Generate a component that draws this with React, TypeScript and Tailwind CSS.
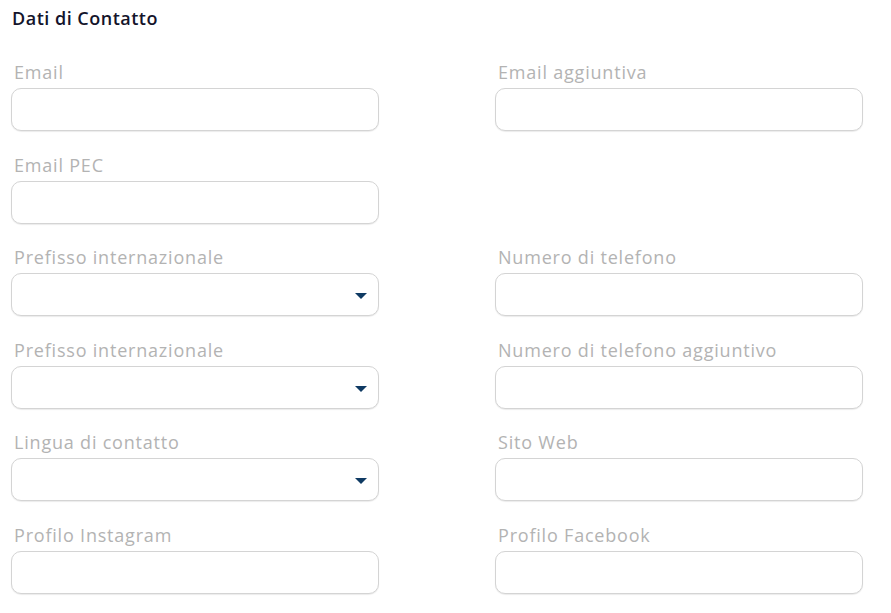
// Sezione "Dati di Contatto" — griglia 2 colonne di campi input / select.

const FIELDS: ({ label: string; select?: boolean } | null)[] = [
  { label: "Email" },
  { label: "Email aggiuntiva" },
  { label: "Email PEC" },
  null,
  { label: "Prefisso internazionale", select: true },
  { label: "Numero di telefono" },
  { label: "Prefisso internazionale", select: true },
  { label: "Numero di telefono aggiuntivo" },
  { label: "Lingua di contatto", select: true },
  { label: "Sito Web" },
  { label: "Profilo Instagram" },
  { label: "Profilo Facebook" },
];

function Field({ label, select }: { label: string; select?: boolean }) {
  return (
    <div className="flex flex-col gap-1">
      <label className="pl-[3px] text-[18px] leading-6 tracking-[0.8px] text-[#b3b3b3]">
        {label}
      </label>
      <div className="relative h-[43px] rounded-[10px] border border-[#d4d4d4] bg-white shadow-[0_1px_1px_rgba(0,0,0,0.08)]">
        {select && (
          <svg
            className="absolute right-[11px] top-[19px]"
            width="12"
            height="6"
            viewBox="0 0 12 6"
          >
            <path d="M0 0h12L6 6z" fill="#0f3a63" />
          </svg>
        )}
      </div>
    </div>
  );
}

export default function App() {
  return (
    <div
      className="min-h-screen bg-white pl-[11px] pr-[28px] pt-[6px]"
      style={{ fontFamily: "'Open Sans', 'Liberation Sans', sans-serif" }}
    >
      <h2 className="pl-[1px] text-[18px] font-semibold leading-6 tracking-[0.5px] text-[#14142b]">
        Dati di Contatto
      </h2>
      <div className="mt-[30px] grid grid-cols-2 gap-x-[116px] gap-y-[21.6px]">
        {FIELDS.map((f, i) =>
          f ? <Field key={i} label={f.label} select={f.select} /> : <div key={i} />
        )}
      </div>
    </div>
  );
}
